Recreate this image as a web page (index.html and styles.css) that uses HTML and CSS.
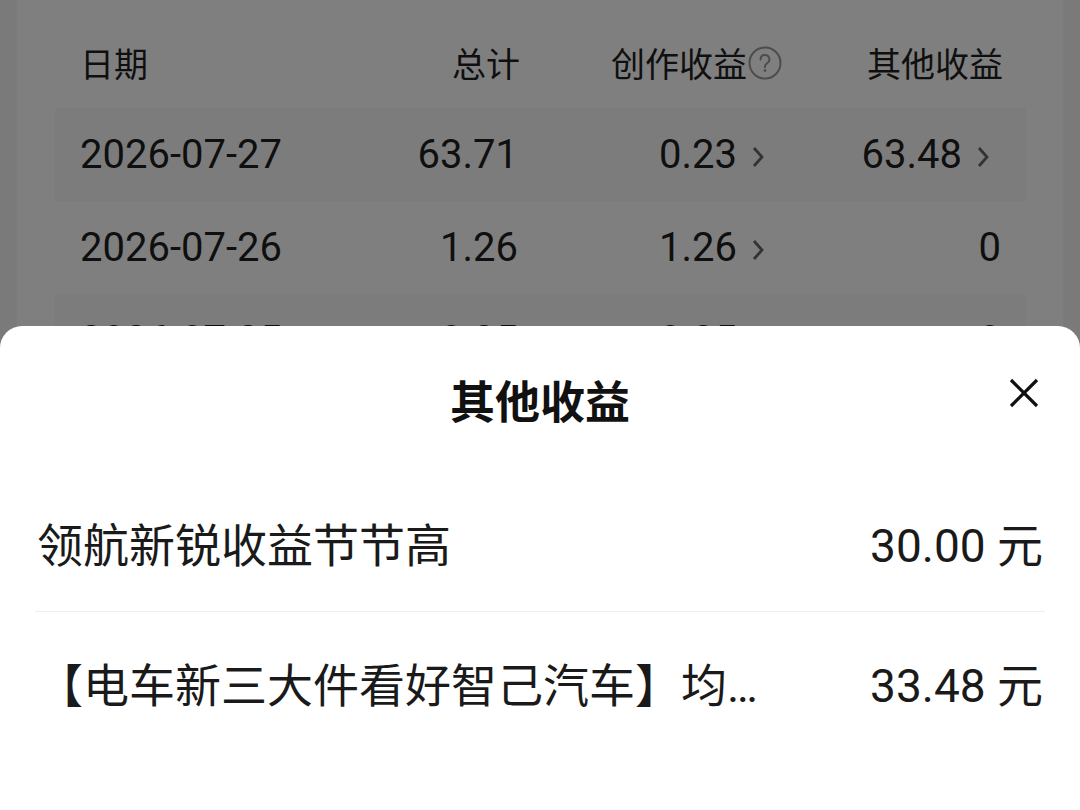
FILE: index.html
```html
<!DOCTYPE html>
<html lang="zh-CN">
<head>
  <meta charset="UTF-8">
  <title>收益明细</title>
  <link rel="stylesheet" href="styles.css">
</head>
<body>
  <div class="card">
    <div class="table">
      <div class="row head">
        <div class="cell">日期</div>
        <div class="cell num">总计</div>
        <div class="cell num">创作收益<svg class="help" viewBox="0 0 34 34" width="34" height="34"><circle cx="17" cy="17" r="15.5" fill="none" stroke="#999" stroke-width="2"/><path d="M12.6 13.4a4.4 4.4 0 1 1 6.4 3.9c-1.4.8-2 1.6-2 3.1v.8" fill="none" stroke="#999" stroke-width="2" stroke-linecap="round"/><circle cx="17" cy="24.6" r="1.4" fill="#999"/></svg></div>
        <div class="cell num">其他收益</div>
      </div>

      <div class="row stripe">
        <div class="cell">2026-07-27</div>
        <div class="cell num">63.71</div>
        <div class="cell num go">0.23<svg class="chev" viewBox="0 0 12 24" width="12" height="24"><path d="M2 3l8 9-8 9" fill="none" stroke="#666" stroke-width="2.8"/></svg></div>
        <div class="cell num go last">63.48<svg class="chev" viewBox="0 0 12 24" width="12" height="24"><path d="M2 3l8 9-8 9" fill="none" stroke="#666" stroke-width="2.8"/></svg></div>
      </div>

      <div class="row">
        <div class="cell">2026-07-26</div>
        <div class="cell num">1.26</div>
        <div class="cell num go">1.26<svg class="chev" viewBox="0 0 12 24" width="12" height="24"><path d="M2 3l8 9-8 9" fill="none" stroke="#666" stroke-width="2.8"/></svg></div>
        <div class="cell num">0</div>
      </div>

      <div class="row stripe">
        <div class="cell">2026-07-25</div>
        <div class="cell num">0.25</div>
        <div class="cell num go">0.25<svg class="chev" viewBox="0 0 12 24" width="12" height="24"><path d="M2 3l8 9-8 9" fill="none" stroke="#666" stroke-width="2.8"/></svg></div>
        <div class="cell num">0</div>
      </div>
    </div>
  </div>

  <!-- bottom sheet over dimmed page -->
  <div class="mask"></div>
  <div class="sheet">
    <div class="sheet-head">
      <span></span>
      <div class="sheet-title">其他收益</div>
      <svg class="close" viewBox="0 0 30 30" width="30" height="30"><path d="M2 2l26 26M28 2L2 28" stroke="#111" stroke-width="3.2"/></svg>
    </div>
    <div class="list">
      <div class="item">
        <div class="name">领航新锐收益节节高</div>
        <div class="amount">30.00 元</div>
      </div>
      <div class="item">
        <div class="name">【电车新三大件看好智己汽车】均衡配置瓜分奖金</div>
        <div class="amount">33.48 元</div>
      </div>
    </div>
  </div>
</body>
</html>
```

FILE: styles.css
```css
body {
  margin: 0;
  background-color: #f4f4f4;
  font-family: Roboto, "Noto Sans CJK SC", sans-serif;
  color: #1e1e1e;
  height: 810px;
  overflow: hidden;
}

.card {
  margin: 0 17px;
  padding: 23px 37px 0 38px;
  background-color: #fff;
  height: 100vh;
  box-sizing: border-box;
}

.row {
  display: grid;
  grid-template-columns: 240px 200px 262px 221px;
  padding: 0 22px 0 25px;
  height: 93px;
  align-items: center;
  font-size: 40px;
}

.row.head {
  height: 85px;
  font-size: 34px;
  padding-bottom: 6px;
  box-sizing: border-box;
}

.stripe {
  background-color: #f9f9f9;
}

.cell {
  white-space: nowrap;
}

.num {
  display: flex;
  justify-content: flex-end;
  align-items: center;
  padding-right: 2px;
}

.head .num {
  padding-right: 0;
}

.go {
  padding-right: 18px;
}

.go.last {
  padding-right: 14px;
}

.chev {
  margin-left: 15px;
  margin-top: 4px;
}

.help {
  margin-left: 1px;
}

.mask {
  position: fixed;
  inset: 0;
  background: rgba(0, 0, 0, 0.5);
}

.sheet {
  position: fixed;
  top: 326px;
  left: 0;
  right: 0;
  bottom: 0;
  background-color: #fff;
  border-radius: 22px 22px 0 0;
  padding: 0 35px;
}

.sheet-head {
  display: grid;
  grid-template-columns: 1fr auto 1fr;
  padding-top: 52px;
}

.sheet-title {
  font-size: 45px;
  line-height: 52px;
  font-weight: 600;
  color: #111;
}

.close {
  justify-self: end;
  margin-right: 6px;
}

.list {
  margin-top: 42px;
}

.item {
  display: flex;
  justify-content: space-between;
  align-items: center;
  height: 139px;
  padding: 0 2px;
  font-size: 46px;
  color: #1a1a1a;
}

.item + .item {
  border-top: 1px solid #ededed;
}

.name {
  max-width: 750px;
  white-space: nowrap;
  overflow: hidden;
  text-overflow: ellipsis;
}

.amount {
  white-space: nowrap;
}
```
